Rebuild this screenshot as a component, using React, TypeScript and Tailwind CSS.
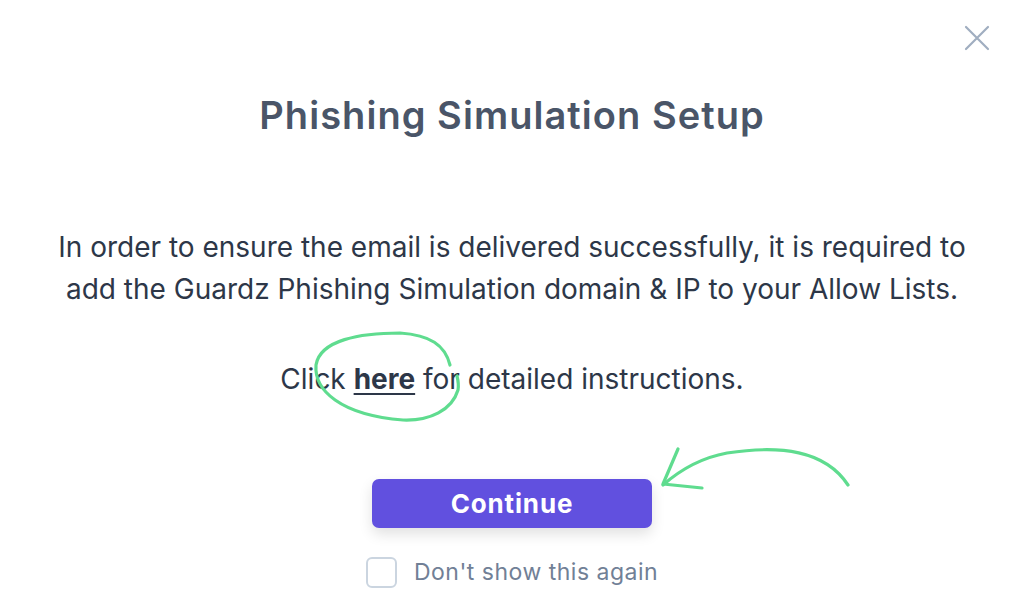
import React from "react";

export default function App() {
  return (
    <div
      className="relative w-[1018px] h-[616px] bg-white overflow-hidden"
      style={{ fontFamily: "Inter, 'Noto Sans', sans-serif" }}
    >
      <button className="absolute right-[28px] top-[25px] w-[26px] h-[26px] text-[#a0aec0]">
        <svg viewBox="0 0 26 26" width="26" height="26" fill="none" stroke="currentColor" strokeWidth="2.2" strokeLinecap="round">
          <path d="M2 2 L24 24 M24 2 L2 24" />
        </svg>
      </button>

      <div className="flex flex-col items-center pt-[92px] pl-[6px]">
        <h1 className="text-[38px] leading-[46px] font-semibold text-[#4a5568] tracking-[1.05px]">
          Phishing Simulation Setup
        </h1>
        <p className="mt-[88px] text-center text-[28px] leading-[42px] text-[#2d3748]">
          In order to ensure the email is delivered successfully, it is required to
          <br />
          add the Guardz Phishing Simulation domain &amp; IP to your Allow Lists.
        </p>
        <p className="mt-[48px] text-center text-[28px] leading-[42px] text-[#2d3748]">
          Click <a className="font-bold underline underline-offset-[4px] decoration-2">here</a> for detailed instructions.
        </p>
        <button className="mt-[79px] w-[280px] h-[49px] rounded-[7px] bg-[#6150df] text-white text-[26px] font-bold tracking-[0.85px] shadow-[0_6px_14px_rgba(0,0,0,0.12)]">
          Continue
        </button>
        <label className="mt-[27px] flex items-center gap-[17px]">
          <span className="w-[31px] h-[31px] rounded-[6px] border-2 border-[#cbd5e0] bg-white" />
          <span className="text-[23px] tracking-[0.5px] text-[#718096]">Don't show this again</span>
        </label>
      </div>

      <svg className="absolute inset-0 pointer-events-none" width="1018" height="616" fill="none" stroke="#5fdc8f" strokeWidth="3.2" strokeLinecap="round" strokeLinejoin="round">
        <path d="M450 365 C 445 345, 430 335, 400 333 C 360 333, 320 340, 316 365 C 314 390, 340 415, 403 420 C 430 421, 452 410, 458 390 C 459 384, 458 380, 457 376" />
        <path d="M848 485 C 825 450, 780 445, 727 453 C 700 458, 680 470, 663 485" />
        <path d="M678 449 L 663 484 L 702 488" />
      </svg>
    </div>
  );
}
